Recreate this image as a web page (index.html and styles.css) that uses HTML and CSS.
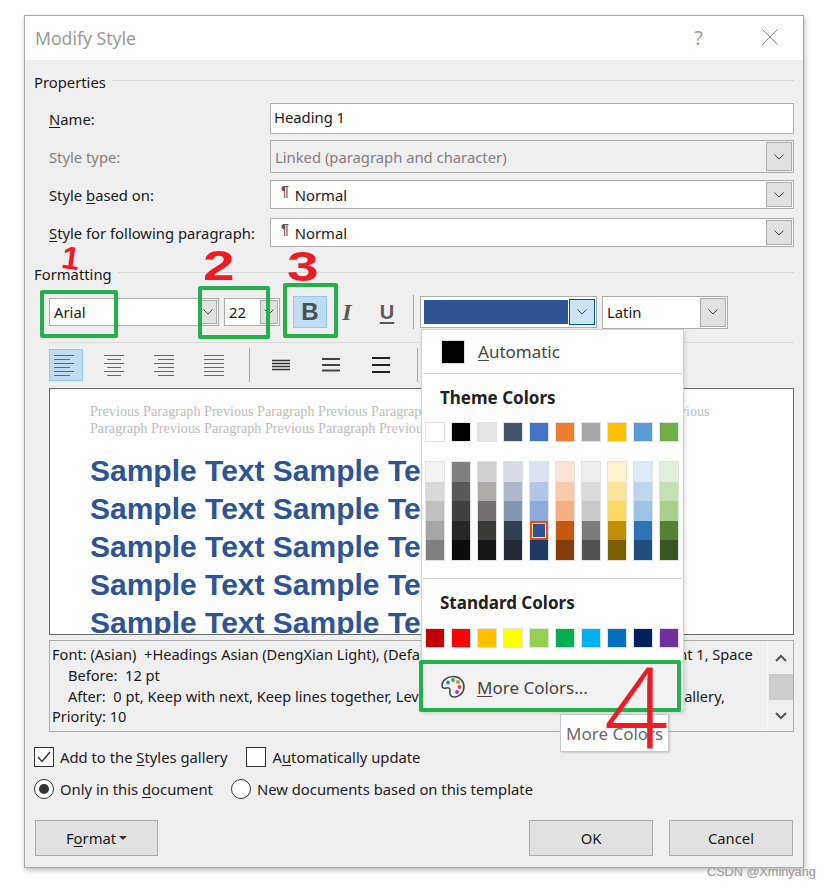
FILE: index.html
```html
<!DOCTYPE html>
<html lang="en">
<head>
<meta charset="utf-8">
<title>Modify Style</title>
<link rel="stylesheet" href="styles.css">
</head>
<body>
<div class="dialog">
  <header class="titlebar">
    <span class="title">Modify Style</span>
    <span class="help">?</span>
    <svg class="close" width="16" height="16" viewBox="0 0 16 16"><path d="M0.5 0.5L15.5 15.5M15.5 0.5L0.5 15.5" stroke="#8a8a8a" fill="none"/></svg>
  </header>
  <div class="content">
    <div class="group-head first"><span>Properties</span><i></i></div>
    <div class="form-row r-name"><label><u>N</u>ame:</label><div class="field"><span class="name-val">Heading 1</span></div></div>
    <div class="form-row r-type"><label class="dim">Style type:</label><div class="field disabled"><span class="type-val">Linked (paragraph and character)</span><span class="drop"><svg width="10" height="6" viewBox="0 0 10 6"><path d="M0.5 0.5L5 5L9.5 0.5" stroke="#444" fill="none"/></svg></span></div></div>
    <div class="form-row r-based"><label>Style <u>b</u>ased on:</label><div class="field"><span class="pilcrow">¶</span><span>Normal</span><span class="drop"><svg width="10" height="6" viewBox="0 0 10 6"><path d="M0.5 0.5L5 5L9.5 0.5" stroke="#444" fill="none"/></svg></span></div></div>
    <div class="form-row r-follow"><label><u>S</u>tyle for following paragraph:</label><div class="field"><span class="pilcrow">¶</span><span>Normal</span><span class="drop"><svg width="10" height="6" viewBox="0 0 10 6"><path d="M0.5 0.5L5 5L9.5 0.5" stroke="#444" fill="none"/></svg></span></div></div>

    <div class="group-head second"><span>Formatting</span><i></i></div>
    <div class="toolbar">
      <div class="combo c-font"><span class="val">Arial</span><span class="drop"><svg width="10" height="6" viewBox="0 0 10 6"><path d="M0.5 0.5L5 5L9.5 0.5" stroke="#444" fill="none"/></svg></span></div>
      <div class="combo c-size"><span class="val">22</span><span class="drop"><svg width="10" height="6" viewBox="0 0 10 6"><path d="M0.5 0.5L5 5L9.5 0.5" stroke="#444" fill="none"/></svg></span></div>
      <button class="tbtn bold on">B</button>
      <button class="tbtn italic">I</button>
      <button class="tbtn under">U</button>
      <span class="vsep s-tool"></span>
      <div class="combo c-color"><span class="fill"></span><span class="drop active"><svg width="10" height="6" viewBox="0 0 10 6"><path d="M0.5 0.5L5 5L9.5 0.5" stroke="#444" fill="none"/></svg></span></div>
      <div class="combo c-lang"><span class="val">Latin</span><span class="drop"><svg width="10" height="6" viewBox="0 0 10 6"><path d="M0.5 0.5L5 5L9.5 0.5" stroke="#444" fill="none"/></svg></span></div>
    </div>
    <div class="hrule"></div>
    <div class="alignbar">
      <button class="abtn on"><svg width="20" height="22" viewBox="0 0 20 22"><path d="M0 1.5H20M0 5.5H16M0 9.5H20M0 13.5H16M0 17.5H20M0 21.5H16" stroke="#666"/></svg></button>
      <button class="abtn"><svg width="20" height="22" viewBox="0 0 20 22"><path d="M0 1.5H20M3 5.5H17M0 9.5H20M3 13.5H17M0 17.5H20M3 21.5H17" stroke="#666"/></svg></button>
      <button class="abtn"><svg width="20" height="22" viewBox="0 0 20 22"><path d="M0 1.5H20M4 5.5H20M0 9.5H20M4 13.5H20M0 17.5H20M4 21.5H20" stroke="#666"/></svg></button>
      <button class="abtn"><svg width="20" height="22" viewBox="0 0 20 22"><path d="M0 1.5H20M0 5.5H20M0 9.5H20M0 13.5H20M0 17.5H20M0 21.5H20" stroke="#666"/></svg></button>
      <span class="vsep s-a1"></span>
      <svg class="sp sp1" width="18" height="16" viewBox="0 0 18 16"><path d="M0 3.5H18M0 6.5H18M0 9.5H18M0 12.5H18" stroke="#333" stroke-width="1.6"/></svg>
      <svg class="sp sp2" width="18" height="16" viewBox="0 0 18 16"><path d="M0 2H18M0 8H18M0 13.5H18" stroke="#444" stroke-width="2"/></svg>
      <svg class="sp sp3" width="18" height="16" viewBox="0 0 18 16"><path d="M0 1H18M0 8H18M0 15H18" stroke="#222" stroke-width="2"/></svg>
      <span class="vsep s-a2"></span>
    </div>
    <div class="preview">
      <p class="prev">Previous Paragraph Previous Paragraph Previous Paragraph Previous Paragraph Previous Paragraph Previous<br>Paragraph Previous Paragraph Previous Paragraph Previous</p>
      <p class="sample">Sample Text Sample Text Sample Text<br>Sample Text Sample Text Sample Text<br>Sample Text Sample Text Sample Text<br>Sample Text Sample Text Sample Text<br>Sample Text Sample Text Sample Text</p>
    </div>
    <div class="desc">
      <div class="desc-text">
        <div class="dline">Font: (Asian)&nbsp; +Headings Asian (DengXian Light), (Default)&nbsp; Arial, 22 pt, Bold, Font color: Accent 1, Space</div>
        <div class="dline ind">Before:&nbsp; 12 pt</div>
        <div class="dline ind">After:&nbsp; 0 pt, Keep with next, Keep lines together, Level 1,&nbsp; Style: Linked, Show in the Styles gallery,</div>
        <div class="dline">Priority: 10</div>
      </div>
      <div class="scroll">
        <svg width="12" height="8" viewBox="0 0 12 8"><path d="M1 7L6 2L11 7" stroke="#555" stroke-width="2" fill="none"/></svg>
        <span class="thumb"></span>
        <svg width="12" height="8" viewBox="0 0 12 8"><path d="M1 1L6 6L11 1" stroke="#555" stroke-width="2" fill="none"/></svg>
      </div>
    </div>
    <div class="optrow o1">
      <span class="box"><svg width="18" height="18" viewBox="0 0 18 18"><path d="M3 9L7 13.5L15 4" stroke="#333" stroke-width="1.4" fill="none"/></svg></span>
      <span class="opt">Add to the <u>S</u>tyles gallery</span>
      <span class="box b2"></span>
      <span class="opt">A<u>u</u>tomatically update</span>
    </div>
    <div class="optrow o2">
      <span class="radio sel"></span>
      <span class="opt">Only in this <u>d</u>ocument</span>
      <span class="radio r2"></span>
      <span class="opt">New documents based on this template</span>
    </div>
    <div class="btnrow">
      <button class="btn fmt">F<u>o</u>rmat<span class="caret"></span></button>
      <button class="btn ok">OK</button>
      <button class="btn cancel">Cancel</button>
    </div>
  </div>

  <div class="popup">
    <div class="auto"><span class="auto-sw"></span><span><u>A</u>utomatic</span></div>
    <div class="pline"></div>
    <div class="phead h-theme">Theme Colors</div>
    <div class="swrow">
      <span class="sw" style="background:#ffffff"></span><span class="sw" style="background:#000000"></span><span class="sw" style="background:#e7e6e6"></span><span class="sw" style="background:#44546a"></span><span class="sw" style="background:#4472c4"></span><span class="sw" style="background:#ed7d31"></span><span class="sw" style="background:#a5a5a5"></span><span class="sw" style="background:#ffc000"></span><span class="sw" style="background:#5b9bd5"></span><span class="sw" style="background:#70ad47"></span>
    </div>
    <div class="tints">
      <div class="tcol"><span style="background:#f2f2f2"></span><span style="background:#d9d9d9"></span><span style="background:#bfbfbf"></span><span style="background:#a6a6a6"></span><span style="background:#808080"></span></div>
      <div class="tcol"><span style="background:#7f7f7f"></span><span style="background:#595959"></span><span style="background:#404040"></span><span style="background:#262626"></span><span style="background:#0d0d0d"></span></div>
      <div class="tcol"><span style="background:#d0cece"></span><span style="background:#aeaaaa"></span><span style="background:#757070"></span><span style="background:#3b3838"></span><span style="background:#161616"></span></div>
      <div class="tcol"><span style="background:#d6dce4"></span><span style="background:#adb9ca"></span><span style="background:#8496b0"></span><span style="background:#323f4f"></span><span style="background:#222a35"></span></div>
      <div class="tcol"><span style="background:#d9e2f3"></span><span style="background:#b4c6e7"></span><span style="background:#8eaadb"></span><span class="picked" style="background:#2f5496"></span><span style="background:#1f3864"></span></div>
      <div class="tcol"><span style="background:#fbe4d5"></span><span style="background:#f7caac"></span><span style="background:#f4b083"></span><span style="background:#c45911"></span><span style="background:#833c0b"></span></div>
      <div class="tcol"><span style="background:#ededed"></span><span style="background:#dbdbdb"></span><span style="background:#c9c9c9"></span><span style="background:#7b7b7b"></span><span style="background:#525252"></span></div>
      <div class="tcol"><span style="background:#fff2cc"></span><span style="background:#ffe599"></span><span style="background:#ffd966"></span><span style="background:#bf8f00"></span><span style="background:#7f6000"></span></div>
      <div class="tcol"><span style="background:#deeaf6"></span><span style="background:#bdd6ee"></span><span style="background:#9cc2e5"></span><span style="background:#2e74b5"></span><span style="background:#1f4e79"></span></div>
      <div class="tcol"><span style="background:#e2efd9"></span><span style="background:#c5e0b3"></span><span style="background:#a8d08d"></span><span style="background:#538135"></span><span style="background:#375623"></span></div>
    </div>
    <div class="pline l2"></div>
    <div class="phead h-std">Standard Colors</div>
    <div class="swrow">
      <span class="sw" style="background:#c00000"></span><span class="sw" style="background:#ff0000"></span><span class="sw" style="background:#ffc000"></span><span class="sw" style="background:#ffff00"></span><span class="sw" style="background:#92d050"></span><span class="sw" style="background:#00b050"></span><span class="sw" style="background:#00b0f0"></span><span class="sw" style="background:#0070c0"></span><span class="sw" style="background:#002060"></span><span class="sw" style="background:#7030a0"></span>
    </div>
    <div class="more">
      <svg width="24" height="24" viewBox="0 0 24 24"><path d="M12.5 1.5C6 1.5 1 5.5 1 10.5C1 13.5 3.5 13.5 5.5 13C7.5 12.5 9.5 13 9 15.5C8.5 18 9 22 13 22C18.5 22 23 17.5 23 12C23 6 18.5 1.5 12.5 1.5Z" stroke="#444" stroke-width="1.5" fill="none"/><circle cx="7" cy="7.5" r="1.9" fill="#2f7fd1"/><circle cx="12" cy="5" r="1.9" fill="#3fa648"/><circle cx="17" cy="7" r="1.9" fill="#ed7d31"/><circle cx="18.5" cy="12" r="1.9" fill="#e5484d"/><circle cx="16" cy="17" r="1.9" fill="#9b3fb5"/></svg>
      <span><u>M</u>ore Colors...</span>
    </div>
  </div>

  <div class="tooltip">More Colors</div>
</div>

<span class="gbox g1"></span>
<span class="gbox g2"></span>
<span class="gbox g3"></span>
<span class="gbox g4"></span>
<span class="mark m1">1</span>
<span class="mark m2">2</span>
<span class="mark m3">3</span>
<span class="mark m4">4</span>
<span class="wm">CSDN @Xminyang</span>
</body>
</html>
```
FILE: styles.css
```css
* { box-sizing: border-box; }
html, body { margin: 0; padding: 0; background: #fff; }
body { width: 832px; height: 889px; position: relative; overflow: hidden; font-family: "Noto Sans", "Open Sans", sans-serif; font-size: 14.8px; color: #1a1a1a; }
u { text-underline-offset: 2px; text-decoration-thickness: 1px; }

.dialog { position: absolute; left: 24px; top: 15px; width: 780px; height: 853px; background: #efefef; border: 1px solid #a8a8a8; box-shadow: 1px 2px 5px rgba(0,0,0,.28); }

.titlebar { height: 44px; background: #fff; display: flex; align-items: center; padding-left: 10px; position: relative; }
.title { font-size: 17.6px; color: #9a9a9a; }
.help { margin-left: auto; font-size: 20px; color: #a0a0a0; margin-right: 59px; margin-top: -2px; }
.close { margin-right: 25px; margin-top: -2px; }

.content { padding: 0 9px 0 10px; display: flex; flex-direction: column; }
.group-head { display: flex; align-items: center; height: 20px; margin-left: -1px; }
.group-head i { flex: 1; height: 1px; background: #d9d9d9; margin-left: 6px; margin-top: -3px; }
.group-head.first { margin-top: 12px; }
.group-head.second { margin-top: 17px; }

.form-row { display: flex; align-items: center; padding-left: 14px; }
.form-row label { width: 221px; flex: none; }
.dim { color: #808080; }
.r-name { margin-top: 11px; height: 31px; }
.r-type { margin-top: 6px; height: 33px; }
.r-based { margin-top: 7px; height: 29px; }
.r-follow { margin-top: 9px; height: 29px; }
.field { flex: 1; height: 100%; background: #fff; border: 1px solid #adadad; display: flex; align-items: center; position: relative; padding-left: 10px; }
.field.disabled { background: #efefef; color: #808080; padding-left: 4px; }
.name-val { margin-left: -7px; margin-top: -3px; }
.pilcrow { font-size: 14px; color: #555; margin-right: 6px; margin-top: -8px; font-family: "Liberation Sans", sans-serif; font-weight: bold; }
.drop { position: absolute; right: 1px; top: 1px; bottom: 1px; width: 26px; background: #e1e1e1; border: 1px solid #adadad; display: flex; align-items: center; justify-content: center; }

.toolbar { display: flex; align-items: center; height: 34px; margin-top: 11px; padding-left: 14px; }
.combo { position: relative; height: 28px; background: #fff; border: 1px solid #adadad; display: flex; align-items: center; padding-left: 4px; flex: none; }
.c-font { width: 170px; }
.c-size { width: 56px; margin-left: 5px; }
.c-size .drop, .c-font .drop { width: 18px; }
.c-color { width: 177px; height: 32px; margin-left: 6px; padding-left: 3px; }
.c-color .fill { width: 144px; height: 24px; background: #2f5496; }
.c-color .drop.active { background: #cce4f7; border: 1px solid #005499; right: 1px; top: 2px; bottom: 2px; width: 26px; }
.c-lang { width: 126px; height: 33px; margin-left: 5px; }
.tbtn { flex: none; width: 34px; height: 32px; background: transparent; border: 1px solid transparent; padding: 0; color: #595959; font-size: 22px; line-height: 1; }
.tbtn.bold { margin-left: 13px; font-family: "Liberation Sans", sans-serif; font-weight: bold; font-size: 24px; color: #4d4d4d; }
.tbtn.on { background: #bfdcf3; border-color: #90c8f6; }
.tbtn.italic { margin-left: 3px; font-family: "Liberation Serif", serif; font-style: italic; font-weight: bold; font-size: 24px; }
.tbtn.under { margin-left: 6px; font-family: "Liberation Sans", sans-serif; font-weight: bold; font-size: 20px; text-decoration: underline; text-underline-offset: 3px; }
.vsep { width: 1px; background: #a8a8a8; flex: none; }
.s-tool { height: 34px; margin-left: 9px; }

.hrule { height: 1px; background: #d9d9d9; margin-top: 13px; margin-left: 14px; }

.alignbar { display: flex; align-items: center; height: 32px; margin-top: 6px; padding-left: 14px; }
.abtn { flex: none; width: 34px; height: 32px; padding: 0 0 0 4px; background: transparent; border: 1px solid transparent; margin-right: 16px; display: flex; align-items: center; }
.abtn.on { background: #bfdcf3; border-color: #90c8f6; }
.s-a1 { height: 34px; margin-left: 0; }
.sp { flex: none; }
.sp1 { margin-left: 22px; }
.sp2 { margin-left: 32px; }
.sp3 { margin-left: 32px; }
.s-a2 { height: 34px; margin-left: 27px; }

.preview { margin: 7px 0 0 14px; height: 247px; background: #fff; border: 1px solid #6a6a6a; overflow: hidden; padding-left: 40px; white-space: nowrap; }
.prev { margin: 14px 0 0; font-family: "Liberation Serif", serif; font-size: 14.16px; line-height: 17px; color: #bdbdbd; }
.sample { margin: 15px 0 0; font-family: "Liberation Sans", sans-serif; font-weight: bold; font-size: 30px; line-height: 38px; color: #2f5496; }

.desc { margin: 5px 0 0 14px; height: 92px; border: 1px solid #adadad; display: flex; background: #efefef; }
.desc-text { flex: 1; padding: 3px 0 0 2px; overflow: hidden; line-height: 20.8px; white-space: nowrap; font-size: 14.6px; }
.ind { padding-left: 16px; }
.scroll { width: 26px; flex: none; display: flex; flex-direction: column; align-items: center; justify-content: space-between; padding: 13px 0 11px; border-left: 1px solid #f6f6f6; }
.thumb { width: 24px; height: 26px; background: #cdcdcd; }

.optrow { display: flex; align-items: center; height: 20px; margin-left: -1px; }
.o1 { margin-top: 15px; }
.o2 { margin-top: 12px; }
.box { width: 20px; height: 20px; border: 1px solid #333; background: #fff; flex: none; display: flex; align-items: center; justify-content: center; }
.box svg { display: block; }
.box.b2 { margin-left: 19px; }
.opt { margin-left: 6px; color: #222; }
.radio { width: 20px; height: 20px; border: 1px solid #333; border-radius: 50%; background: #fff; flex: none; position: relative; }
.radio.sel::after { content: ""; position: absolute; left: 4px; top: 4px; width: 10px; height: 10px; border-radius: 50%; background: #333; }
.radio.r2 { margin-left: 18px; }

.btnrow { display: flex; margin-top: 21px; height: 36px; }
.btn { font: inherit; color: #1a1a1a; background: #e1e1e1; border: 1px solid #adadad; height: 36px; width: 124px; padding: 0; }
.fmt { width: 123px; }
.ok { margin-left: auto; }
.cancel { margin-left: 16px; margin-right: 1px; }
.caret { display: inline-block; width: 0; height: 0; border: 4px solid transparent; border-top-color: #333; border-bottom: 0; margin-left: 3px; vertical-align: 4px; }

.popup { position: absolute; left: 396px; top: 313px; width: 263px; height: 382px; background: #fff; border: 1px solid #d4d4d4; box-shadow: 1px 2px 4px rgba(0,0,0,.15); padding-left: 3px; display: flex; flex-direction: column; }
.auto { display: flex; align-items: center; height: 43px; padding-left: 16px; font-size: 17px; color: #444; }
.auto-sw { width: 24px; height: 24px; background: #000; border: 1px solid #ddd; margin-right: 13px; }
.pline { height: 1px; background: #d4d4d4; margin-left: -2px; margin-right: 1px; flex: none; }
.phead { font-weight: bold; font-size: 17px; color: #222; padding-left: 15px; line-height: 22px; }
.h-theme { margin-top: 13px; }
.swrow { display: flex; gap: 6px; flex: none; }
.h-theme + .swrow { margin-top: 13px; }
.sw { width: 20px; height: 20px; border: 1px solid #e2e2e2; flex: none; }
.tints { display: flex; gap: 6px; margin-top: 19px; flex: none; }
.tcol { width: 20px; height: 100px; border: 1px solid #e2e2e2; display: flex; flex-direction: column; position: relative; }
.tcol span { flex: 1; display: block; }
.picked { position: relative; outline: 2px solid #f2490f; outline-offset: -2px; box-shadow: inset 0 0 0 3px #ffe39a; }
.l2 { margin-top: 17px; }
.h-std { margin-top: 13px; }
.h-std + .swrow { margin-top: 14px; }
.more { margin: 17px 0 0 -2px; height: 44px; width: 258px; background: #f2f2f2; display: flex; align-items: center; padding-left: 18px; font-size: 17px; color: #444; gap: 12px; flex: none; }

.tooltip { position: absolute; left: 535px; top: 698px; width: 109px; height: 38px; background: #fff; border: 1px solid #c8c8c8; box-shadow: 1px 1px 2px rgba(0,0,0,.15); font-size: 17px; color: #6b6b6b; display: flex; align-items: center; padding-left: 5px; white-space: nowrap; }

.gbox { position: absolute; border: 4px solid #22b14c; border-radius: 2px; }
.g1 { left: 40px; top: 290px; width: 78px; height: 48px; }
.g2 { left: 198px; top: 286px; width: 72px; height: 53px; }
.g3 { left: 283px; top: 283px; width: 55px; height: 55px; }
.g4 { left: 419px; top: 660px; width: 262px; height: 52px; }

.mark { position: absolute; color: #ed1c24; font-family: "Liberation Sans", sans-serif; font-weight: bold; line-height: 1; }
.m1 { left: 62px; top: 242px; font-size: 32px; transform: rotate(8deg); }
.m2 { left: 207px; top: 245px; font-size: 42px; transform: scaleX(1.35); }
.m3 { left: 291px; top: 246px; font-size: 42px; transform: scaleX(1.35); }
.m4 { left: 604px; top: 650px; font-size: 112px; font-family: "Open Sans", sans-serif; font-weight: 300; }

.wm { position: absolute; left: 707px; top: 865px; font-size: 12.7px; color: #a0a0a0; white-space: nowrap; font-family: "Liberation Sans", sans-serif; text-shadow: 0 0 1px #ccc; }
```
